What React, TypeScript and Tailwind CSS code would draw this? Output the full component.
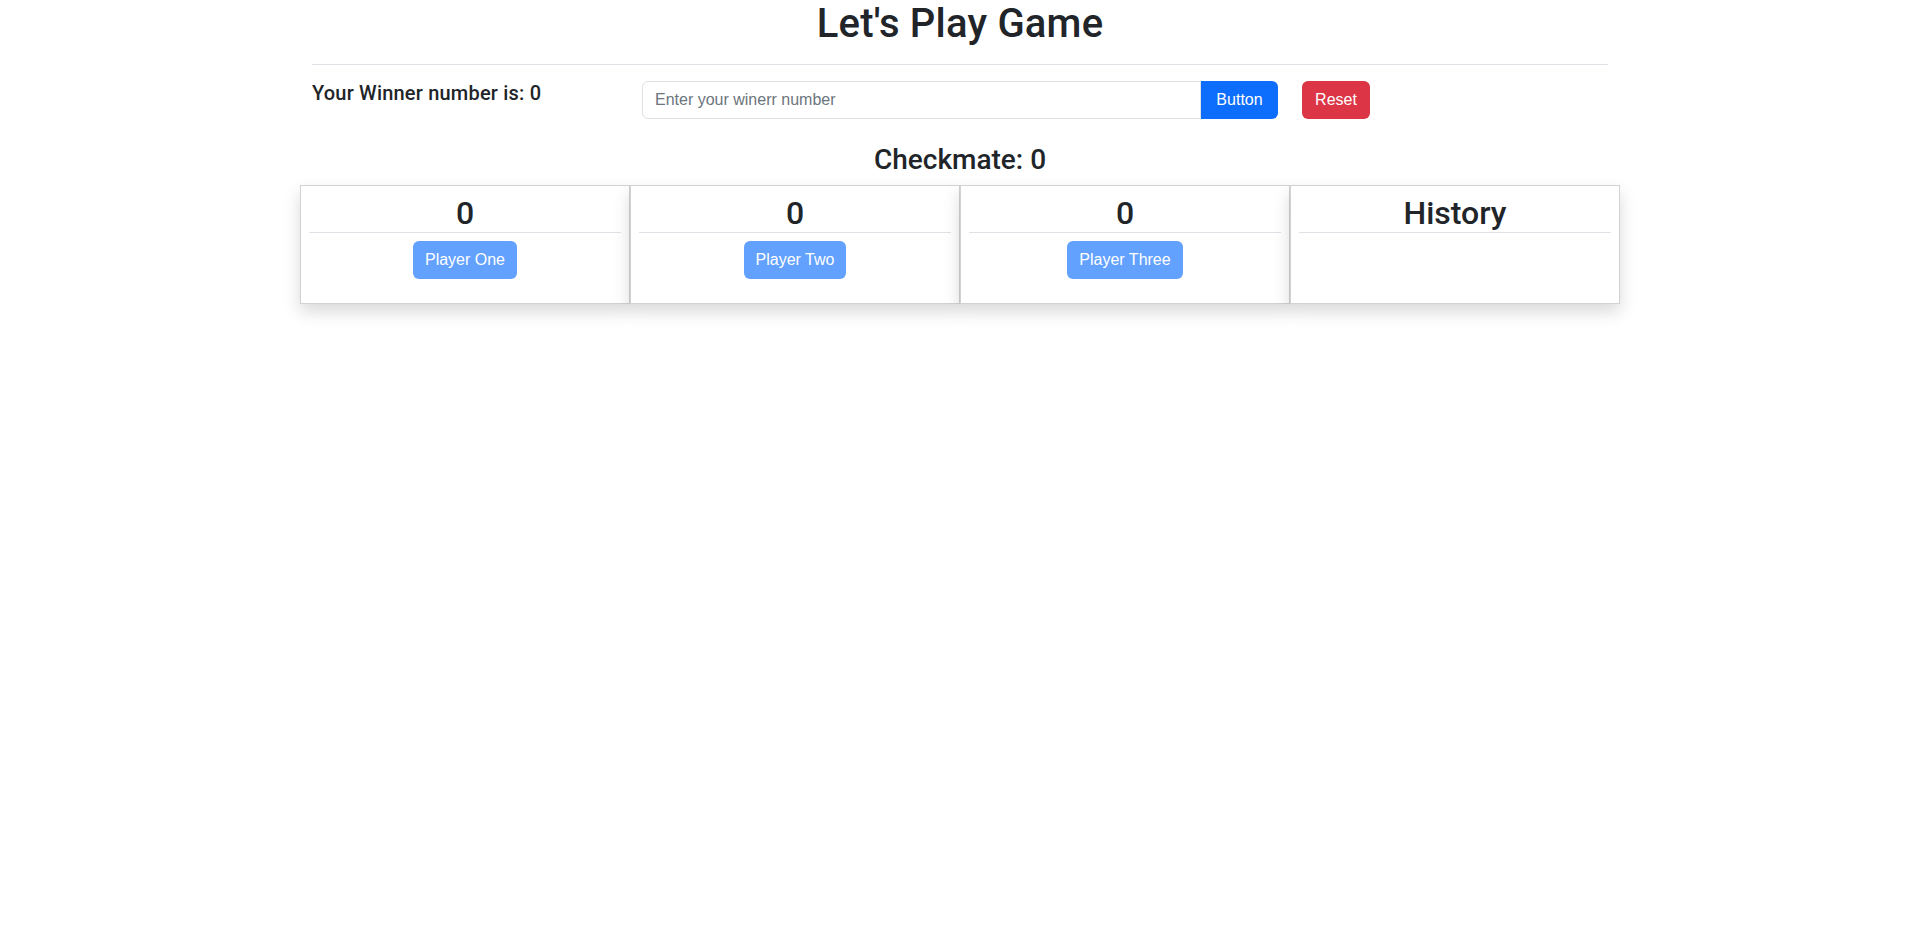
import { useState } from 'react'

const players = ['Player One', 'Player Two', 'Player Three']

export default function App() {
  const [winner] = useState(0)
  const [value, setValue] = useState('')

  return (
    <div className="min-h-screen bg-white text-[#212529] font-['Liberation_Sans',Arial,sans-serif]">
      <div className="mx-auto w-[1320px] px-3">
        <h1 className="text-center font-['Roboto',sans-serif] text-[40px] leading-[48px] font-medium tracking-[0.2px]">Let's Play Game</h1>
        <hr className="my-4 border-t border-[#dee2e6]" />

        <div className="-mx-3 flex">
          <div className="w-[330px] px-3">
            <h5 className="mb-2 font-['Roboto',sans-serif] text-[20px] leading-[24px] font-medium tracking-[0.2px]">Your Winner number is: {winner}</h5>
          </div>
          <div className="w-[660px] px-3">
            <div className="flex">
              <input
                type="text"
                value={value}
                onChange={(e) => setValue(e.target.value)}
                placeholder="Enter your winerr number"
                className="h-[38px] flex-1 rounded-l-[6px] border border-[#dee2e6] px-3 text-base text-[#212529] placeholder:text-[#6c757d] focus:outline-none"
              />
              <button className="h-[38px] w-[77px] rounded-r-[6px] bg-[#0d6efd] text-base text-white">Button</button>
            </div>
          </div>
          <div className="w-[330px] px-3">
            <button className="h-[38px] w-[68px] rounded-[6px] bg-[#dc3545] text-base text-white">Reset</button>
          </div>
        </div>

        <h3 className="mt-6 mb-2 text-center font-['Roboto',sans-serif] text-[28px] leading-[34px] font-medium">Checkmate: 0</h3>

        <div className="-mx-3 grid grid-cols-4">
          {players.map((p) => (
            <div key={p} className="border border-[rgba(0,0,0,0.175)] bg-white p-2 shadow-[0_8px_16px_rgba(0,0,0,0.15)]">
              <h2 className="text-center font-['Roboto',sans-serif] text-[32px] leading-[38px] font-medium">0</h2>
              <hr className="border-t border-[#dee2e6]" />
              <div className="mt-2 mb-4 flex justify-center">
                <button disabled className="h-[38px] rounded-[6px] bg-[#62a1fe] px-3 text-base text-white">{p}</button>
              </div>
            </div>
          ))}
          <div className="border border-[rgba(0,0,0,0.175)] bg-white p-2 shadow-[0_8px_16px_rgba(0,0,0,0.15)]">
            <h2 className="text-center font-['Roboto',sans-serif] text-[32px] leading-[38px] font-medium">History</h2>
            <hr className="border-t border-[#dee2e6]" />
          </div>
        </div>
      </div>
    </div>
  )
}
